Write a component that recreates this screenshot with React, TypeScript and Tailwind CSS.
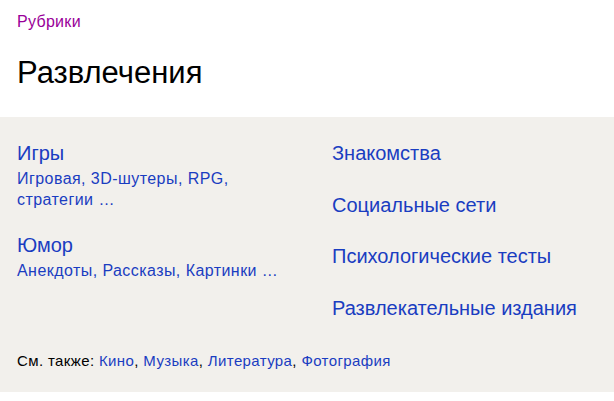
import React from "react";

const link = "text-[#1a3dc1]";

export default function App() {
  return (
    <div className="w-[614px] h-[401px] bg-white font-['Liberation_Sans',Arial,sans-serif] text-black">
      <div className="px-[17px] pt-[12px] pb-[24px]">
        <div className="text-[16px] leading-[20px] tracking-[0.3px] text-[#990099]">Рубрики</div>
        <h1 className="mt-[21px] text-[31px] leading-[40px]">Развлечения</h1>
      </div>
      <div className="bg-[#f2f0ec] px-[17px] pt-[24px] pb-[21px]">
        <div className="grid grid-cols-[315px_1fr]">
          <div className="flex flex-col">
            <div className={`text-[20px] leading-[24px] ${link}`}>Игры</div>
            <div className={`mt-[3px] text-[16px] leading-[21px] tracking-[0.44px] ${link} w-[260px]`}>
              Игровая, 3D-шутеры, RPG,<br />стратегии …
            </div>
            <div className={`mt-[23px] text-[20px] leading-[24px] ${link}`}>Юмор</div>
            <div className={`mt-[3px] text-[16px] leading-[21px] tracking-[0.44px] ${link}`}>
              Анекдоты, Рассказы, Картинки …
            </div>
          </div>
          <div className={`flex flex-col gap-[27.5px] text-[20px] leading-[24px] ${link}`}>
            <div>Знакомства</div>
            <div>Социальные сети</div>
            <div>Психологические тесты</div>
            <div>Развлекательные издания</div>
          </div>
        </div>
        <div className="mt-[31.5px] text-[15px] leading-[20px] tracking-[0.38px]">
          См. также: <span className={link}>Кино</span>, <span className={link}>Музыка</span>,{" "}
          <span className={link}>Литература</span>, <span className={link}>Фотография</span>
        </div>
      </div>
    </div>
  );
}
